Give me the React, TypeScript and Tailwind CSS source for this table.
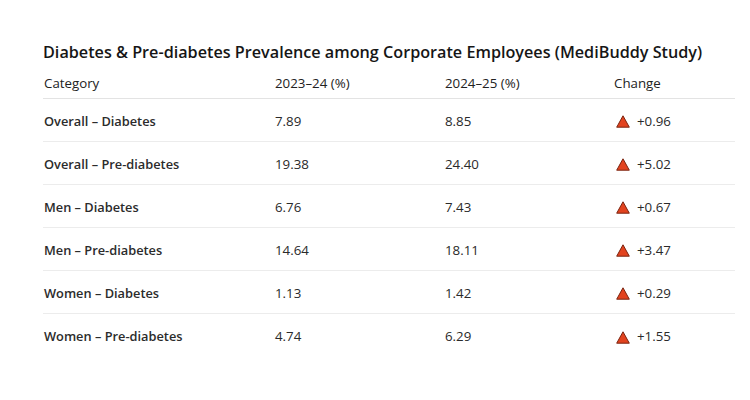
const ROWS = [
  { cat: "Overall – Diabetes", a: "7.89", b: "8.85", c: "+0.96" },
  { cat: "Overall – Pre-diabetes", a: "19.38", b: "24.40", c: "+5.02" },
  { cat: "Men – Diabetes", a: "6.76", b: "7.43", c: "+0.67" },
  { cat: "Men – Pre-diabetes", a: "14.64", b: "18.11", c: "+3.47" },
  { cat: "Women – Diabetes", a: "1.13", b: "1.42", c: "+0.29" },
  { cat: "Women – Pre-diabetes", a: "4.74", b: "6.29", c: "+1.55" },
];

function UpTriangle() {
  return (
    <svg width="14" height="13" viewBox="0 0 14 13" className="shrink-0">
      <path d="M7 0.8 L13.3 12.2 L0.7 12.2 Z" fill="#e2431f" stroke="#7a2410" strokeWidth="1" strokeLinejoin="round" />
    </svg>
  );
}

export default function App() {
  return (
    <div
      className="h-[400px] w-[750px] bg-white text-[#1f1f1f]"
      style={{ fontFamily: '"Open Sans", "Noto Sans", sans-serif' }}
    >
      <div className="pl-[43px] pr-[15px] pt-[41px]">
        <h2 className="text-[16.2px] font-semibold leading-[22px] text-[#161616]">
          Diabetes &amp; Pre-diabetes Prevalence among Corporate Employees (MediBuddy Study)
        </h2>
        <div className="mt-[11px] text-[13.3px]">
          <div className="grid h-[25px] grid-cols-[231px_170px_169px_1fr] items-start border-b border-[#e3e3e3] pl-px leading-[18px] text-[#222]">
            <span>Category</span>
            <span>2023–24 (%)</span>
            <span>2024–25 (%)</span>
            <span>Change</span>
          </div>
          {ROWS.map((r, i) => (
            <div
              key={r.cat}
              className={`grid h-[43px] grid-cols-[231px_170px_169px_1fr] items-center pl-px pt-[3px] ${
                i < ROWS.length - 1 ? "border-b border-[#ececec]" : ""
              }`}
            >
              <span className="text-[12.8px] font-semibold text-[#2b2b2b]">{r.cat}</span>
              <span className="text-[#2a2a2a]">{r.a}</span>
              <span className="text-[#2a2a2a]">{r.b}</span>
              <span className="flex items-center gap-[7px] pl-[2px] text-[#2a2a2a]">
                <UpTriangle />
                {r.c}
              </span>
            </div>
          ))}
        </div>
      </div>
    </div>
  );
}
